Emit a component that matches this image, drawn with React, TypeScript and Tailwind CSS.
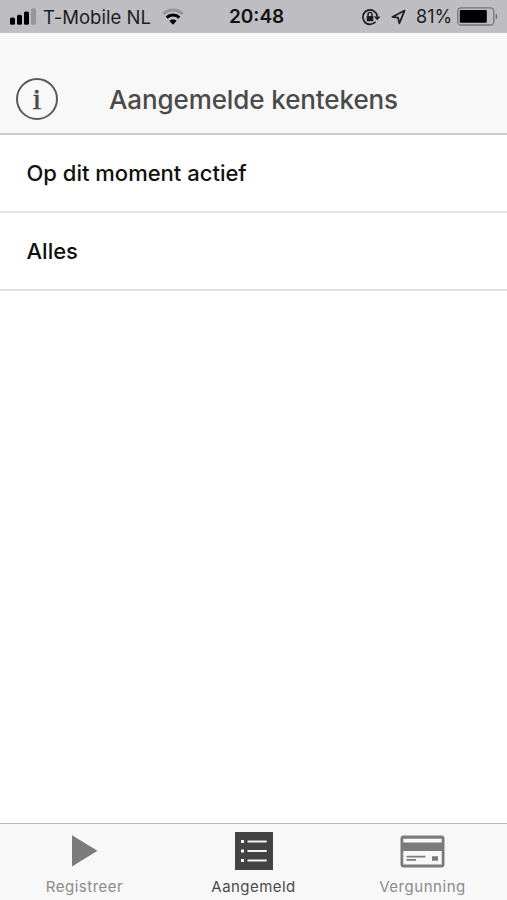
import { ReactNode, useState } from 'react';

type TabId = 'registreer' | 'aangemeld' | 'vergunning';

interface Tab {
  id: TabId;
  label: string;
  labelClass: string;
  icon: ReactNode;
}

const SignalIcon = () => (
  <svg width="26" height="17" viewBox="0 0 26 17">
    <rect x="0" y="9.5" width="5" height="7.3" rx="1.6" />
    <rect x="7" y="6.8" width="5" height="10" rx="1.6" />
    <rect x="14" y="3.5" width="5" height="13.3" rx="1.6" />
    <rect x="21" y="0.2" width="5" height="16.6" rx="1.6" fill="#97979b" />
  </svg>
);

const WifiIcon = () => (
  <svg width="22" height="17" viewBox="0 0 22 17" fill="none" strokeWidth="3">
    <path d="M1.2 6C6.8.8 15.2.8 20.8 6" stroke="#97979b" />
    <path d="M4.6 9.6C8.3 6.1 13.7 6.1 17.4 9.6" stroke="#000" />
    <path d="M7.4 12.8C9.5 10.9 12.5 10.9 14.6 12.8L11 16.7Z" fill="#000" />
  </svg>
);

const RotationLockIcon = () => (
  <svg width="20" height="18" viewBox="0 0 20 18" fill="none" stroke="#1c1c1e">
    <path d="M14.5 13.8A7.2 7.2 0 1 1 16.2 8.6" strokeWidth="1.7" />
    <path d="M12.9 8.4H19.5L16.2 12.3Z" fill="#1c1c1e" stroke="none" />
    <rect x="5.7" y="7.9" width="6.6" height="5.3" rx=".7" fill="#1c1c1e" stroke="none" />
    <path d="M7 8.3V6.4a2 2 0 0 1 4 0v1.9" strokeWidth="1.4" />
  </svg>
);

const LocationIcon = () => (
  <svg width="15" height="16" viewBox="0 0 15 16" fill="none" stroke="#1c1c1e" strokeWidth="1.7" strokeLinejoin="round">
    <path d="M13.6 1.6L1.3 7.9L7.1 8.6L8.3 14.4Z" />
  </svg>
);

const BatteryIcon = () => (
  <svg width="41" height="19" viewBox="0 0 41 19">
    <rect x=".8" y=".8" width="36" height="17.2" rx="3.5" fill="none" stroke="#77777b" strokeWidth="1.3" />
    <rect x="2.8" y="3" width="27" height="12.8" rx="1" />
    <path d="M38.7 6.2c2.2 1 2.2 5.4 0 6.4z" fill="#77777b" />
  </svg>
);

const PlayIcon = () => (
  <svg width="26" height="32" viewBox="0 0 26 32">
    <path d="M0 .3L25.5 15.8L0 31.5Z" fill="#7b7b7b" />
  </svg>
);

const ListIcon = () => (
  <svg width="38" height="38" viewBox="0 0 38 38">
    <path d="M0 0H38V38H0Z" fill="#434343" />
    <path d="M6 8h3v3H6zM6 17.5h3v3H6zM6 27h3v3H6zM12.5 8.6h19.2v1.8H12.5zM12.5 18.1h19.2v1.8H12.5zM12.5 27.6h19.2v1.8H12.5z" fill="#f4f4f4" />
  </svg>
);

const CardIcon = () => (
  <svg width="45" height="33" viewBox="0 0 45 33">
    <rect x=".5" y=".5" width="44" height="32" rx="3" fill="#7b7b7b" />
    <path d="M3.3 3.8H41.7V7.4H3.3zM3.3 16H41.7V29.6H3.3z" fill="#f8f8f8" />
    <path d="M6.5 20.8H25.5V22.4H6.5zM6.5 24.1H16V25.7H6.5zM32 21.2H38V25.7H32z" fill="#7b7b7b" />
  </svg>
);

const tabs: Tab[] = [
  { id: 'registreer', label: 'Registreer', labelClass: 'tracking-[0.5px]', icon: <PlayIcon /> },
  { id: 'aangemeld', label: 'Aangemeld', labelClass: 'tracking-[0.45px]', icon: <ListIcon /> },
  { id: 'vergunning', label: 'Vergunning', labelClass: 'tracking-[0.55px]', icon: <CardIcon /> },
];

const rows = ['Op dit moment actief', 'Alles'];

const StatusBar = () => (
  <div className="flex h-[33px] shrink-0 items-center bg-[#bebdc2] pl-[10px] text-[#1c1c1e]">
    <SignalIcon />
    <span className="ml-[7px] mt-px w-[119px] whitespace-nowrap text-[18.5px] leading-6 tracking-[0.05px]">T-Mobile NL</span>
    <WifiIcon />
    <span className="ml-[45px] mt-px w-[132px] whitespace-nowrap text-[19px] font-semibold leading-6 text-[#111]">20:48</span>
    <RotationLockIcon />
    <span className="ml-[10px]"><LocationIcon /></span>
    <span className="ml-[10px] mt-px w-[41px] whitespace-nowrap text-[18px] leading-6">81%</span>
    <BatteryIcon />
  </div>
);

const App = () => {
  const [activeTab, setActiveTab] = useState<TabId>('aangemeld');

  return (
    <div className="flex h-screen w-full flex-col overflow-hidden bg-white font-['Inter',sans-serif]">
      <StatusBar />

      <header className="relative flex h-[102px] shrink-0 items-end justify-center border-b-2 border-[#cecece] bg-[#f8f8f8] pb-[17px]">
        <button
          className="absolute bottom-[13px] left-4 flex size-[42px] items-center justify-center rounded-full border-2 border-[#5a5a5a] font-['Liberation_Serif',serif] text-[30px] leading-none text-[#4a4a4a] [-webkit-text-stroke:0.6px_#4a4a4a]"
          aria-label="Info"
        >
          i
        </button>
        <h1 className="whitespace-nowrap text-[26px] font-medium leading-8 tracking-[-0.1px] text-[#4a4a4a]">Aangemelde kentekens</h1>
      </header>

      <main className="flex-1">
        {rows.map((row) => (
          <button key={row} className="flex h-[78px] w-full items-center border-b-2 border-[#e3e3e3] pl-[26.5px] text-[22px] font-medium text-[#111]">
            <span className="mt-px whitespace-nowrap">{row}</span>
          </button>
        ))}
      </main>

      <nav className="grid h-[77px] shrink-0 grid-cols-3 border-t border-[#b8b8b8] bg-[#f8f8f8]">
        {tabs.map((tab) => (
          <button key={tab.id} onClick={() => setActiveTab(tab.id)} className="flex flex-col items-center">
            <span className="mt-2 flex h-[38px] items-center">{tab.icon}</span>
            <span
              className={`mt-[7px] whitespace-nowrap text-[15px] leading-5 ${tab.labelClass} ${
                activeTab === tab.id ? 'text-[#4a4a4a]' : 'text-[#8b8b8b]'
              }`}
            >
              {tab.label}
            </span>
          </button>
        ))}
      </nav>
    </div>
  );
};

export default App;
